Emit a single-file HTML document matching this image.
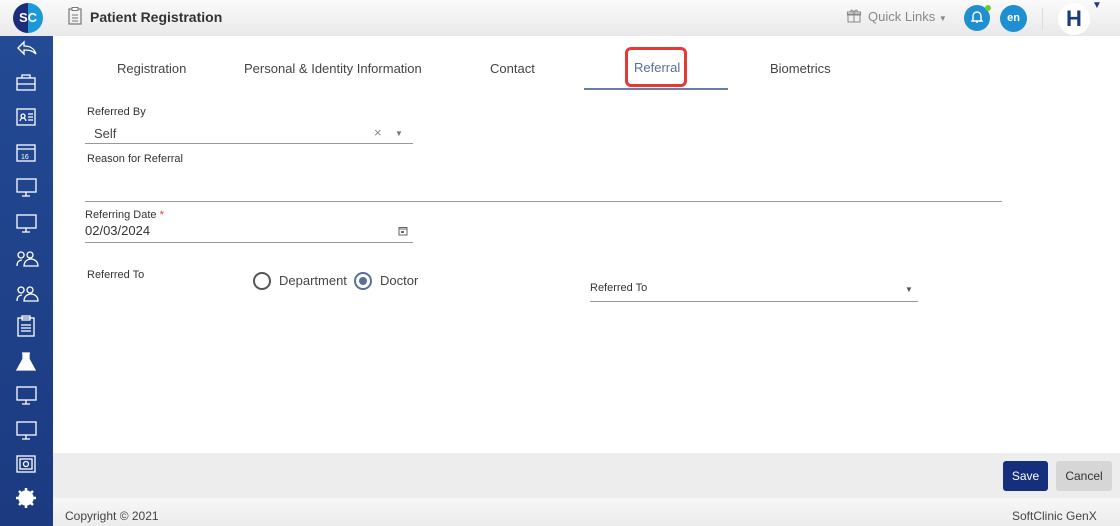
<!DOCTYPE html>
<html><head><style>
*{box-sizing:border-box;margin:0;padding:0}
body{width:1120px;height:526px;overflow:hidden;background:#fff;font-family:"Liberation Sans",Arial,sans-serif;position:relative;color:#333}
.hdr{position:absolute;left:0;top:0;width:1120px;height:36px;background:linear-gradient(#fafafa,#e9e9e9)}
.side{position:absolute;left:0;top:36px;width:53px;height:490px;background:linear-gradient(#234a94,#1b3a80)}
.abs{position:absolute}
.lbl{position:absolute;font-size:11px;color:#333}
.line{position:absolute;height:1px;background:#999}
.tab{position:absolute;top:61px;font-size:13px;color:#444}
svg{position:absolute}
</style></head><body>
<div class="hdr"></div>
<div class="abs" style="left:13px;top:3px;width:30px;height:30px;border-radius:50%;background:linear-gradient(90deg,#1b2c7a 50%,#1a9ad6 50%);color:#fff;font-weight:bold;font-size:13px;text-align:center;line-height:30px">SC</div>
<svg style="left:68px;top:7px" width="14" height="18" viewBox="0 0 14 18"><rect x="1" y="2" width="12" height="15" fill="none" stroke="#777" stroke-width="1.2"/><rect x="4" y="0.5" width="6" height="3" fill="#fff" stroke="#777"/><path d="M4 8h6M4 11h6M4 14h6" stroke="#777"/></svg>
<div class="abs" style="left:90px;top:9px;font-size:14px;font-weight:bold;color:#333">Patient Registration</div>
<svg style="left:847px;top:9px" width="14" height="14" viewBox="0 0 14 14"><rect x="1" y="5" width="12" height="8" fill="none" stroke="#888"/><rect x="0.5" y="3" width="13" height="3" fill="none" stroke="#888"/><path d="M7 3v10M7 3C5 0 3 1 4 3M7 3C9 0 11 1 10 3" stroke="#888" fill="none"/></svg>
<div class="abs" style="left:868px;top:9px;font-size:13px;color:#888">Quick Links <span style="font-size:8px">▼</span></div>
<div class="abs" style="left:964px;top:5px;width:26px;height:26px;border-radius:50%;background:#1e8fd0"></div>
<svg style="left:971px;top:11px" width="12" height="13" viewBox="0 0 12 13"><path d="M2 9V5a4 4 0 0 1 8 0v4l1 1H1z M5 11h2" stroke="#fff" fill="none" stroke-width="1.4"/></svg>
<div class="abs" style="left:985px;top:5px;width:6px;height:6px;border-radius:50%;background:#6c3"></div>
<div class="abs" style="left:1000px;top:5px;width:27px;height:27px;border-radius:50%;background:#1e8fd0;color:#fff;font-size:11px;font-weight:bold;text-align:center;line-height:27px">en</div>
<div class="abs" style="left:1042px;top:8px;width:1px;height:22px;background:#ddd"></div>
<div class="abs" style="left:1058px;top:3px;width:32px;height:32px;border-radius:50%;background:#fff;color:#1b3a80;font-size:22px;font-weight:bold;text-align:center;line-height:32px">H</div>
<div class="abs" style="left:1092px;top:0px;font-size:10px;color:#1b3a80">▼</div>

<div class="side"></div>
<svg style="left:0;top:36px" width="53" height="490" viewBox="0 0 53 490" fill="none" stroke="#fff" stroke-width="1.3">
<path d="M18 12l6-6v4c6 0 10 2 12 8-3-3-6-4-12-4v4z"/>
<rect x="17" y="42" width="18" height="12"/><path d="M22 42v-3h8v3M17 48h18"/>
<rect x="17" y="73" width="18" height="16"/><path d="M20 85c1-4 5-4 6 0M28 78h5M28 81h5M28 84h5"/><circle cx="23" cy="80" r="2"/>
<rect x="17" y="109" width="18" height="16"/><path d="M17 113h18"/><text x="21" y="123" font-size="7" fill="#fff" stroke="none">16</text>
<rect x="17" y="143" width="19" height="13"/><path d="M26 156v4M22 160h8"/>
<rect x="17" y="179" width="19" height="13"/><path d="M26 192v4M22 196h8"/>
<path d="M17 230c0-5 3-6 5-6M21 222a3 3 0 1 1 0.1 0M24 230c0-5 4-7 7-7s7 2 7 7z"/><circle cx="30" cy="219" r="3"/>
<path d="M17 265c0-5 3-6 5-6M21 257a3 3 0 1 1 0.1 0M24 265c0-5 4-7 7-7s7 2 7 7z"/><circle cx="30" cy="254" r="3"/>
<rect x="18" y="282" width="16" height="18"/><path d="M22 280h8v4h-8zM21 289h10M21 292h10M21 295h10"/>
<path d="M22 317h8M23 317v6l-6 11h18l-6-11v-6z" fill="#fff"/>
<rect x="17" y="351" width="19" height="13"/><path d="M26 364v4M22 368h8"/>
<rect x="17" y="386" width="19" height="13"/><path d="M26 399v4M22 403h8"/>
<rect x="17" y="420" width="18" height="16"/><rect x="20" y="423" width="12" height="10"/><circle cx="26" cy="428" r="2.5"/>
<circle cx="26" cy="462" r="7" fill="#fff"/><path d="M26 452v20M16 462h20M19 455l14 14M33 455l-14 14" stroke-width="2.5"/>
</svg>

<div class="tab" style="left:117px">Registration</div>
<div class="tab" style="left:244px">Personal &amp; Identity Information</div>
<div class="tab" style="left:490px">Contact</div>
<div class="tab" style="left:634px;top:60px;color:#5a6e9a">Referral</div>
<div class="abs" style="left:625px;top:47px;width:62px;height:40px;border:3px solid #e53935;border-radius:6px"></div>
<div class="line" style="left:584px;top:88px;width:144px;background:#6a7fa6;height:1.5px"></div>
<div class="tab" style="left:770px">Biometrics</div>

<div class="lbl" style="left:87px;top:106px">Referred By</div>
<div class="abs" style="left:94px;top:126px;font-size:13px;color:#444">Self</div>
<div class="abs" style="left:374px;top:125px;font-size:13px;color:#888">×</div>
<div class="abs" style="left:395px;top:129px;font-size:8px;color:#777">▼</div>
<div class="line" style="left:85px;top:143px;width:328px"></div>
<div class="lbl" style="left:87px;top:153px">Reason for Referral</div>
<div class="line" style="left:85px;top:201px;width:917px"></div>
<div class="lbl" style="left:85px;top:209px">Referring Date <span style="color:#e33">*</span></div>
<div class="abs" style="left:85px;top:223px;font-size:13px;color:#333">02/03/2024</div>
<svg style="left:398px;top:226px" width="10" height="10" viewBox="0 0 10 10"><rect x="1" y="1.5" width="8" height="7.5" fill="none" stroke="#666"/><path d="M1 3h8" stroke="#666"/><rect x="3" y="5" width="3" height="2" fill="#666"/></svg>
<div class="line" style="left:85px;top:242px;width:328px"></div>
<div class="lbl" style="left:87px;top:269px">Referred To</div>
<div class="abs" style="left:253px;top:272px;width:18px;height:18px;border-radius:50%;border:2px solid #555"></div>
<div class="abs" style="left:279px;top:273px;font-size:13px;color:#444">Department</div>
<div class="abs" style="left:354px;top:272px;width:18px;height:18px;border-radius:50%;border:2px solid #5a6e9a"></div>
<div class="abs" style="left:359px;top:277px;width:8px;height:8px;border-radius:50%;background:#5a6e9a"></div>
<div class="abs" style="left:380px;top:273px;font-size:13px;color:#444">Doctor</div>
<div class="lbl" style="left:590px;top:282px">Referred To</div>
<div class="abs" style="left:905px;top:285px;font-size:8px;color:#555">▼</div>
<div class="line" style="left:590px;top:301px;width:328px"></div>

<div class="abs" style="left:53px;top:453px;width:1067px;height:45px;background:#ededed"></div>
<div class="abs" style="left:1003px;top:461px;width:45px;height:30px;background:#142f7c;border-radius:3px;color:#fff;font-size:12px;text-align:center;line-height:30px">Save</div>
<div class="abs" style="left:1056px;top:461px;width:56px;height:30px;background:#d6d6d6;border-radius:3px;color:#333;font-size:12px;text-align:center;line-height:30px">Cancel</div>
<div class="abs" style="left:53px;top:498px;width:1067px;height:28px;background:linear-gradient(#f7f7f7,#ececec)"></div>
<div class="abs" style="left:65px;top:509px;font-size:12px;color:#444">Copyright © 2021</div>
<div class="abs" style="left:1012px;top:509px;font-size:12px;color:#444">SoftClinic GenX</div>
</body></html>
